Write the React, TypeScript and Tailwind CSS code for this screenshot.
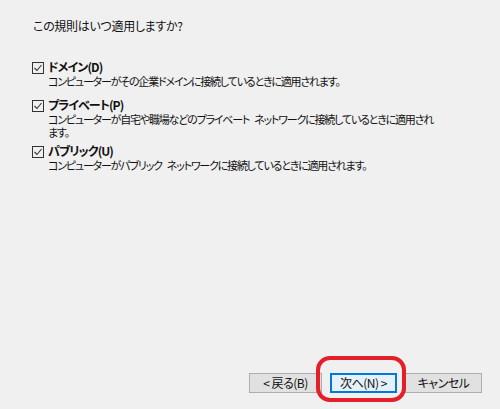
import React from "react";

function Check() {
  return (
    <div className="w-[12px] h-[12px] border border-[#333333] bg-[#f0f0f0] flex items-center justify-center shrink-0 mt-[3px] mr-[4px]">
      <svg width="10" height="10" viewBox="0 0 10 10">
        <polyline points="1.5,5 4,7.5 8.5,2" fill="none" stroke="#333333" strokeWidth="1.1" />
      </svg>
    </div>
  );
}

function Sp() {
  return <span className="inline-block w-[5px]"> </span>;
}

function Item({ label, desc, className }: { label: string; desc: React.ReactNode; className?: string }) {
  return (
    <div className={"flex items-start " + (className ?? "")}>
      <Check />
      <div className="flex flex-col">
        <div className="font-bold leading-[16px] text-[12px] tracking-[-0.9px]">{label}</div>
        <div className="leading-[13px] w-[386px] text-[11px] tracking-[-1.2px]">{desc}</div>
      </div>
    </div>
  );
}

export default function App() {
  return (
    <div
      className="w-[500px] h-[409px] bg-[#f0f0f0] flex flex-col text-[12px] text-[#111] relative overflow-hidden [font-feature-settings:'palt']"
      style={{ fontFamily: '"Noto Sans CJK JP", "Noto Sans", sans-serif' }}
    >
      <div className="pl-[33px] pt-[18px] leading-[16px] tracking-[-0.3px]">この規則はいつ適用しますか?</div>
      <div className="pl-[32px] mt-[25px] flex flex-col">
        <Item label="ドメイン(D)" desc="コンピューターがその企業ドメインに接続しているときに適用されます。" />
        <Item
          className="mt-[9px]"
          label="プライベート(P)"
          desc={<>コンピューターが自宅や職場などのプライベート<Sp />ネットワークに接続しているときに適用されます。</>}
        />
        <Item
          className="mt-[4px]"
          label="パブリック(U)"
          desc={<>コンピューターがパブリック<Sp />ネットワークに接続しているときに適用されます。</>}
        />
      </div>
      <div className="mt-auto flex justify-end gap-[8px] pr-[18px] pb-[16px] tracking-[-0.5px]">
        <button className="w-[73px] h-[20px] bg-[#e1e1e1] border border-[#adadad] text-[12px] leading-none flex items-center justify-center">
          &lt; 戻る(B)
        </button>
        <button className="w-[67px] h-[20px] bg-[#e5f1fb] border-2 border-[#0078d7] text-[12px] leading-none flex items-center justify-center">
          次へ(N) &gt;
        </button>
        <button className="w-[77px] h-[20px] bg-[#e1e1e1] border border-[#adadad] text-[12px] leading-none flex items-center justify-center">
          キャンセル
        </button>
      </div>
      <div className="absolute left-[316px] top-[356px] w-[90px] h-[46px] border-[4px] border-[#e3202a] rounded-[14px] pointer-events-none" />
    </div>
  );
}
